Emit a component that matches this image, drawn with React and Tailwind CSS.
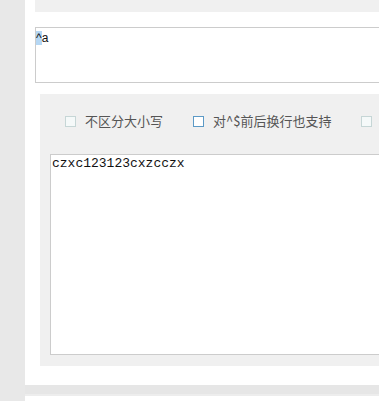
export default function App() {
  const cjk = { fontFamily: '"Microsoft YaHei", "Noto Sans CJK SC", sans-serif' }

  return (
    <div className="w-[379px] h-[401px] overflow-hidden flex bg-white">
      <div className="w-[25px] shrink-0 bg-[#e8e8e8]" />
      <div className="flex-1 flex flex-col overflow-hidden">
        <div className="ml-[10px] h-[12px] w-[400px] bg-[#f0f0f0]" />

        <div className="ml-[10px] mt-[15px] h-[56px] w-[400px] shrink-0 border border-[#cccccc] bg-white pt-[3px] text-[12px] leading-[14px] text-[#111]" style={{ fontFamily: '"Liberation Sans", Arial, sans-serif' }}>
          <span className="bg-[#b5d7f4]">^</span>a
        </div>

        <div className="ml-[15px] mt-[11px] h-[272px] w-[400px] shrink-0 bg-[#f0f0f0] pl-[10px] pt-[20px]">
          <div className="flex items-center h-[14px] pl-[15px] text-[13px] text-[#555]" style={cjk}>
            <span className="w-[11px] h-[11px] border border-[#c6d6d6] bg-[#f5f9f9]" />
            <span className="ml-[9px]">不区分大小写</span>
            <span className="ml-[30px] w-[11px] h-[11px] border border-[#5c9ac6] bg-white" />
            <span className="ml-[9px]">对^$前后换行也支持</span>
            <span className="ml-[30px] w-[11px] h-[11px] border border-[#c6d6d6] bg-[#f5f9f9]" />
          </div>
          <div className="mt-[26px] h-[201px] w-[400px] border border-[#cccccc] bg-white px-px pt-[2px] text-[13px] leading-[14px] text-[#111]" style={{ fontFamily: '"Liberation Mono", "Courier New", monospace' }}>
            czxc123123cxzcczx
          </div>
        </div>

        <div className="mt-[19px] h-[9px] w-[400px] bg-[#e6e6e6]" />
        <div className="h-[2px] w-[400px] bg-[#ededed]" />
      </div>
    </div>
  )
}
